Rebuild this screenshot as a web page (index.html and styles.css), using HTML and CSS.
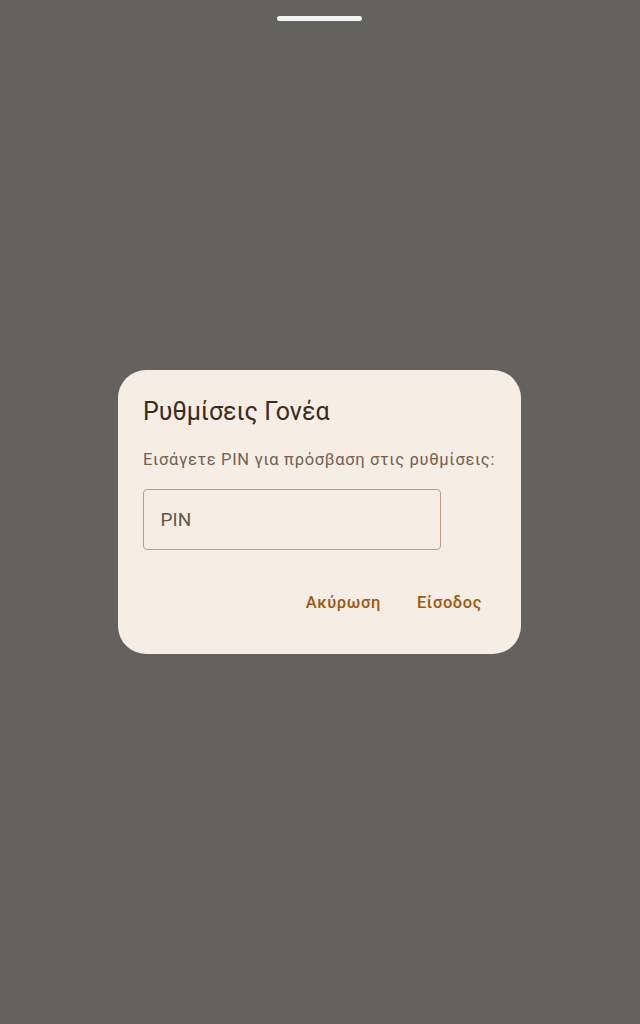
FILE: index.html
```html
<!DOCTYPE html>
<html lang="el">
<head>
<meta charset="utf-8">
<title>Ρυθμίσεις Γονέα</title>
<link rel="stylesheet" href="styles.css">
</head>
<body>
<div class="screen">
  <div class="handle"></div>
  <div class="dialog" role="dialog">
    <h1 class="title">Ρυθμίσεις Γονέα</h1>
    <p class="message">Εισάγετε PIN για πρόσβαση στις ρυθμίσεις:</p>
    <div class="field"><span class="placeholder">PIN</span></div>
    <div class="actions">
      <button class="btn">Ακύρωση</button>
      <button class="btn">Είσοδος</button>
    </div>
  </div>
</div>
</body>
</html>
```
FILE: styles.css
```css
html, body {
  margin: 0;
  padding: 0;
}
body {
  background: #63625e;
  font-family: Roboto, "Noto Sans", sans-serif;
}
.screen {
  position: relative;
  width: 640px;
  height: 1024px;
  display: flex;
  align-items: center;
  justify-content: center;
}
.handle {
  position: absolute;
  top: 16px;
  left: 277px;
  width: 85px;
  height: 5px;
  border-radius: 3px;
  background: #f4f4f4;
}
.dialog {
  box-sizing: border-box;
  width: 403px;
  height: 284px;
  margin-left: -1px;
  background: #f6ede4;
  border-radius: 28px;
  padding: 26px 25px 0 25px;
  display: flex;
  flex-direction: column;
}
.title {
  margin: 0;
  font-size: 25px;
  line-height: 32px;
  font-weight: 400;
  color: #3c2b1b;
}
.message {
  margin: 20px 0 0 0;
  font-size: 16.5px;
  line-height: 24px;
  letter-spacing: 0.67px;
  color: #74604e;
  white-space: nowrap;
}
.field {
  box-sizing: border-box;
  margin-top: 17px;
  width: 298px;
  height: 61px;
  border: 1.5px solid #b8a283;
  border-radius: 4px;
  padding-left: 16.5px;
  display: flex;
  align-items: center;
}
.placeholder {
  font-size: 19px;
  color: #6b5540;
}
.actions {
  margin-top: 32px;
  display: flex;
  justify-content: flex-end;
  gap: 8px;
}
.btn {
  height: 40px;
  padding: 0 14px;
  border: 0;
  background: transparent;
  font-family: Roboto, "Noto Sans", sans-serif;
  font-size: 16.5px;
  font-weight: 500;
  letter-spacing: 0.6px;
  color: #a0580c;
  border-radius: 20px;
}
```
